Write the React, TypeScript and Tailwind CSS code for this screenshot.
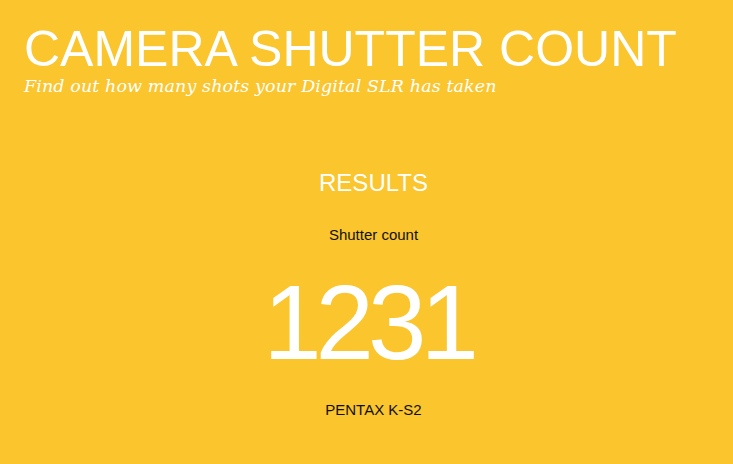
export default function App() {
  return (
    <div className="min-h-[464px] w-full bg-[#fbc52e] font-['Liberation_Sans',Arial,sans-serif]">
      <header className="pl-[24px] pt-[24px]">
        <h1 className="text-[50px] leading-none text-white">CAMERA SHUTTER COUNT</h1>
        <p className="mt-[4px] font-['DejaVu_Serif',Georgia,serif] text-[17.5px] italic leading-[17px] tracking-[0.1px] text-white">
          Find out how many shots your Digital SLR has taken
        </p>
      </header>

      <section className="flex flex-col items-center pl-[14px] pt-[76px] text-center">
        <h2 className="text-[24px] leading-none text-white">RESULTS</h2>
        <p className="mt-[32px] text-[15px] leading-none text-[#111]">Shutter count</p>
        <div className="mt-[28px] pr-[11px] text-[105px] leading-none tracking-[-6px] text-white">1231</div>
        <p className="mt-[27px] text-[15px] leading-none text-[#111]">PENTAX K-S2</p>
      </section>
    </div>
  )
}
